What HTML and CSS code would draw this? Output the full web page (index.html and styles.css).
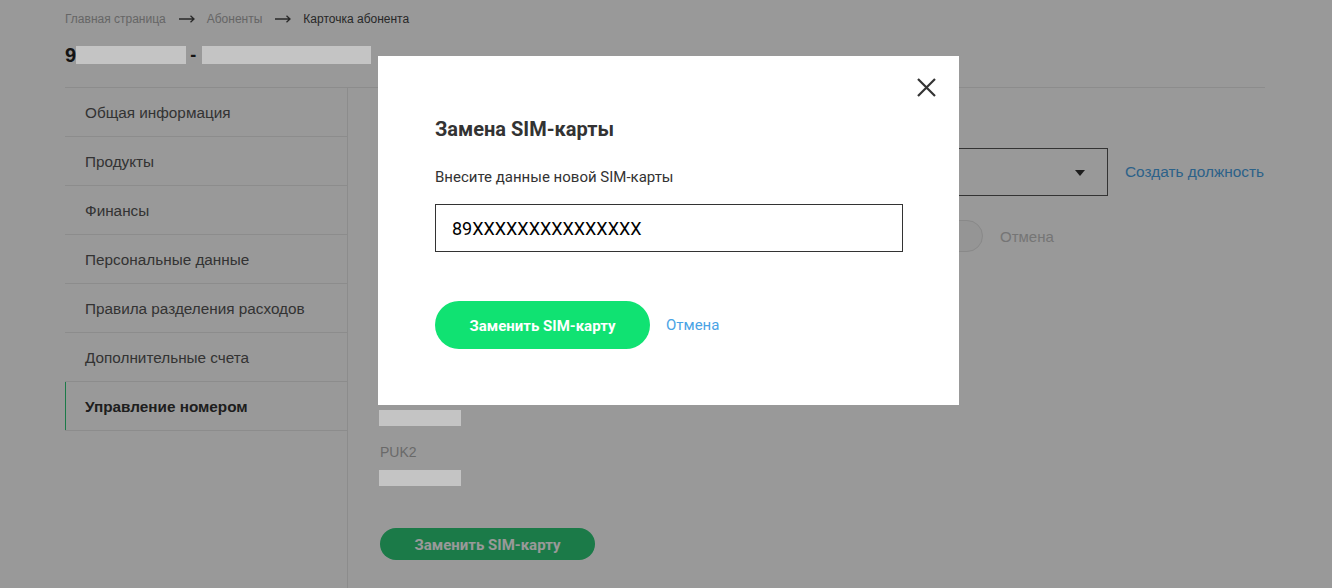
FILE: index.html
```html
<!DOCTYPE html>
<html lang="ru">
<head>
	<meta charset="UTF-8">
	<title>Карточка абонента</title>
	<link rel="stylesheet" href="styles.css">
</head>
<body>
	<div class="page">
		<div class="crumbs">
			<a href="#">Главная страница</a>
			<svg class="arr" width="16" height="8" viewBox="0 0 16 8"><path d="M0 4H15M11.5 0.8L15 4L11.5 7.2" fill="none" stroke="#444" stroke-width="1.3"/></svg>
			<a href="#">Абоненты</a>
			<svg class="arr" width="16" height="8" viewBox="0 0 16 8"><path d="M0 4H15M11.5 0.8L15 4L11.5 7.2" fill="none" stroke="#444" stroke-width="1.3"/></svg>
			<span class="cur">Карточка абонента</span>
		</div>
		<h1 class="num">9<span class="hide w110"></span><span class="dash">-</span><span class="hide w169"></span></h1>

		<div class="layout">
			<ul class="menu">
				<li>Общая информация</li>
				<li>Продукты</li>
				<li>Финансы</li>
				<li>Персональные данные</li>
				<li>Правила разделения расходов</li>
				<li>Дополнительные счета</li>
				<li class="active">Управление номером</li>
			</ul>
			<div class="content">
				<div class="row">
					<div class="select"><span class="tri"></span></div>
					<a class="link" href="#">Создать должность</a>
				</div>
				<div class="row row2">
					<div class="field"></div>
					<span class="pill"></span>
					<span class="cancel">Отмена</span>
				</div>
				<div class="grp">
					<div class="gl">PIN1</div>
					<div class="hide val"></div>
				</div>
				<div class="grp">
					<div class="gl">PUK1</div>
					<div class="hide val"></div>
				</div>
				<div class="grp">
					<div class="gl">PIN2</div>
					<div class="hide val"></div>
				</div>
				<div class="grp">
					<div class="gl">PUK2</div>
					<div class="hide val"></div>
				</div>
				<button class="btn-page">Заменить SIM-карту</button>
			</div>
		</div>
	</div>

	<div class="overlay"></div>
	<div class="modal">
		<span class="close">
			<svg width="19" height="19" viewBox="0 0 19 19"><path d="M1 1L18 18M18 1L1 18" stroke="#333" stroke-width="2.2"/></svg>
		</span>
		<h2>Замена SIM-карты</h2>
		<p>Внесите данные новой SIM-карты</p>
		<input class="inp" type="text" value="89XXXXXXXXXXXXXXX">
		<div class="actions">
			<button class="btn">Заменить SIM-карту</button>
			<a class="mlink" href="#">Отмена</a>
		</div>
	</div>
</body>
</html>
```

FILE: styles.css
```css
*{
	box-sizing: border-box;
}
body{
	margin: 0;
	background: #fff;
	color: #333;
	font-family: "Liberation Sans", Arial, sans-serif;
}
.page{
	padding: 11px 67px 0 65px;
}
	.crumbs{
		display: flex;
		align-items: center;
		height: 16px;
		font-size: 12px;
		line-height: 16px;
	}
		.crumbs a{
			color: #aaa;
			text-decoration: none;
		}
		.crumbs .arr{
			margin: 0 12px 0 13px;
		}
		.crumbs .cur{
			color: #444;
		}
	.num{
		display: flex;
		align-items: center;
		margin: 16px 0 20px;
		height: 24px;
		font-size: 20px;
		line-height: 24px;
		font-weight: bold;
		color: #222;
	}
		.num .dash{
			margin: 0 6px 0 4px;
			font-size: 18px;
		}
	.hide{
		position: relative;
		z-index: 11;
		background: #c4c4c4;
	}
	.num .hide{
		display: inline-block;
		height: 18px;
	}
	.w110{ width: 110px; }
	.w169{ width: 169px; }

.layout{
	display: flex;
	min-height: 501px;
	border-top: 1px solid #eaeaea;
}
	.menu{
		list-style: none;
		margin: 0;
		padding: 0;
		width: 283px;
		border-right: 1px solid #eaeaea;
	}
		.menu li{
			height: 49px;
			padding-left: 20px;
			border-bottom: 1px solid #eaeaea;
			font-size: 15.3px;
			line-height: 49px;
			color: #555;
		}
		.menu li.active{
			font-weight: bold;
			color: #333;
			box-shadow: inset 1px 0 0 #2dcb78;
		}
	.content{
		flex: 1;
		padding: 60px 0 0 32px;
		font-size: 15px;
	}
		.row{
			display: flex;
			align-items: center;
		}
		.select{
			position: relative;
			width: 728px;
			height: 48px;
			border: 1px solid #555;
		}
			.select .tri{
				position: absolute;
				right: 22px;
				top: 21px;
				border-left: 5px solid transparent;
				border-right: 5px solid transparent;
				border-top: 6px solid #333;
			}
		.link{
			margin-left: 17px;
			font-size: 15.4px;
			color: #4aa3e5;
			text-decoration: none;
		}
		.row2{
			margin-top: 24px;
		}
			.field{
				width: 430px;
				height: 32px;
				margin-right: 20px;
				border-bottom: 1px solid #ccc;
			}
			.pill{
				width: 153px;
				height: 32px;
				border: 1px solid #e4e4e4;
				border-radius: 16px;
				background: #f8f8f8;
			}
			.cancel{
				margin-left: 17px;
				color: #c4c4c4;
			}
		.grp{
			margin-top: 10px;
		}
		.grp + .grp{
			margin-top: 16px;
		}
			.gl{
				font-size: 14px;
				line-height: 20px;
				color: #b0b0b0;
			}
			.val{
				width: 82px;
				height: 16px;
				margin: 8px 0 0 -1px;
			}
		.btn-page{
			display: block;
			margin-top: 42px;
			width: 215px;
			height: 32px;
			border: 0;
			border-radius: 16px;
			background: #2dcb78;
			color: #fff;
			font: bold 15px/32px Roboto, sans-serif;
		}

.overlay{
	position: fixed;
	top: 0;
	left: 0;
	right: 0;
	bottom: 0;
	z-index: 10;
	background: rgba(0,0,0,.4);
}
.modal{
	position: fixed;
	top: 56px;
	left: 378px;
	z-index: 20;
	width: 581px;
	padding: 61px 56px 56px 57px;
	background: #fff;
	font-family: Roboto, sans-serif;
}
	.modal .close{
		position: absolute;
		top: 22px;
		right: 23px;
		width: 19px;
		height: 19px;
	}
		.close svg{
			display: block;
		}
	.modal h2{
		margin: 0;
		font-size: 20px;
		line-height: 24px;
		font-weight: bold;
		color: #333;
	}
	.modal p{
		margin: 26px 0 17px;
		font-size: 15px;
		line-height: 20px;
		color: #333;
	}
	.inp{
		display: block;
		width: 468px;
		height: 48px;
		padding: 0 16px;
		border: 1px solid #333;
		border-radius: 0;
		outline: none;
		font: 18px Roboto, sans-serif;
		color: #000;
	}
	.actions{
		display: flex;
		align-items: center;
		margin-top: 49px;
	}
		.btn{
			width: 215px;
			height: 48px;
			border: 0;
			border-radius: 24px;
			background: #10e272;
			color: #fff;
			font: bold 15px/48px Roboto, sans-serif;
		}
		.mlink{
			margin-left: 16px;
			font-size: 15px;
			color: #4aa3e5;
			text-decoration: none;
		}
```
